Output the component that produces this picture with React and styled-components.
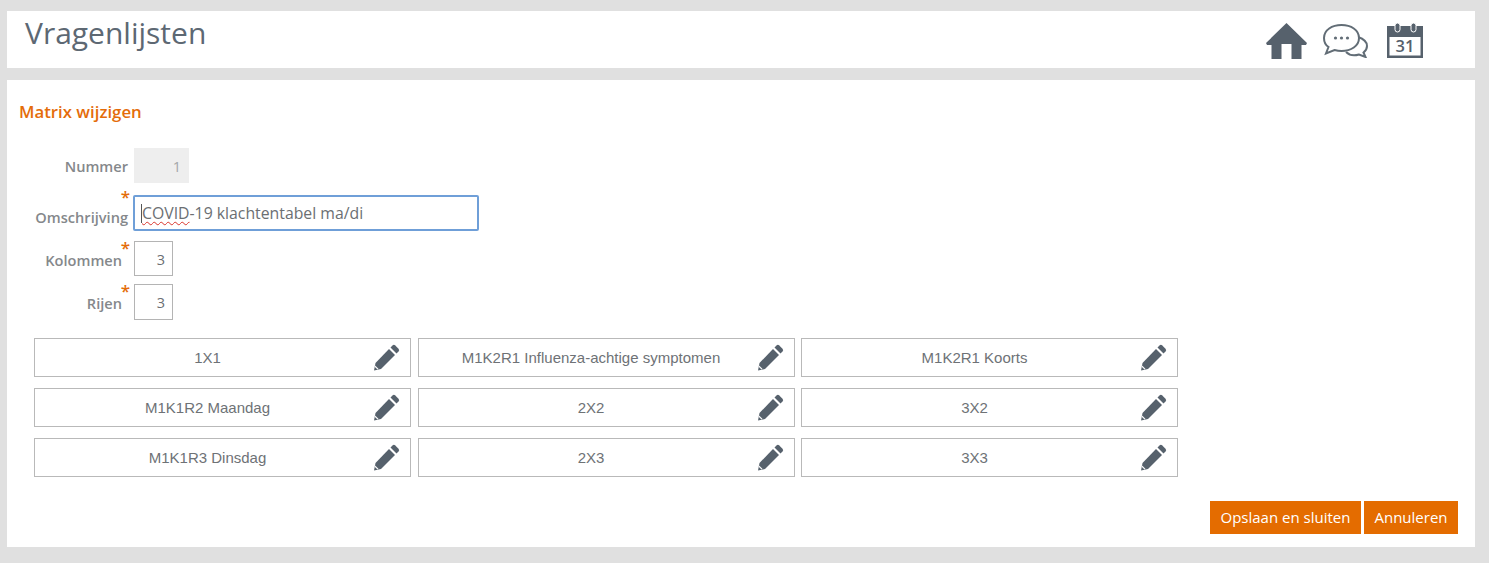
import React from 'react'
import styled, { createGlobalStyle } from 'styled-components'

const GlobalStyle = createGlobalStyle`
  html, body {
    margin: 0;
    padding: 0;
    background: #e0e0e0;
    font-family: 'Open Sans', sans-serif;
  }
`

const cells = [
  '1X1',
  'M1K2R1 Influenza-achtige symptomen',
  'M1K2R1 Koorts',
  'M1K1R2 Maandag',
  '2X2',
  '3X2',
  'M1K1R3 Dinsdag',
  '2X3',
  '3X3',
]

const HomeIcon = () => (
  <svg width='41' height='36' viewBox='0 0 41 36'>
    <path fill='#56616c' d='M20.5 0 L41 20 L40 22 L35.5 22 L35.5 36 L25.5 36 L25.5 21 L15.5 21 L15.5 36 L5.5 36 L5.5 22 L1 22 L0 20 Z' />
  </svg>
)

const ChatIcon = () => (
  <svg width='45' height='34' viewBox='0 0 45 34' fill='#fff' stroke='#626d76' strokeWidth='2'>
    <path d='M35 13 C41 15 44 18 44 22 C44 25 42.5 27 40.5 28.5 L42.5 33 L36 30.5 C31 32 26 31 23 28' />
    <path d='M18.5 1 C28 1 36 6 36 14 C36 22 28 27 18.5 27 C16 27 14 26.7 11.5 26 L3 29.5 L5.5 23 C2.5 21 1 18 1 14 C1 6 9 1 18.5 1 Z' />
    <g fill='#626d76' stroke='none'>
      <circle cx='12.5' cy='14' r='1.6' />
      <circle cx='18.5' cy='14' r='1.6' />
      <circle cx='24.5' cy='14' r='1.6' />
    </g>
  </svg>
)

const CalendarIcon = () => (
  <svg width='36' height='35' viewBox='0 0 36 35'>
    <path fill='#56616c' d='M0 3 H36 V35 H0 Z' />
    <rect x='2.5' y='14' width='31' height='18.5' fill='#fff' />
    <rect x='8' y='0' width='5' height='9' rx='2.5' fill='#56616c' stroke='#fff' strokeWidth='1' />
    <rect x='24' y='0' width='5' height='9' rx='2.5' fill='#56616c' stroke='#fff' strokeWidth='1' />
    <text x='18' y='29' textAnchor='middle' fontFamily='Open Sans, sans-serif' fontWeight='600' fontSize='16.5' fill='#56616c'>31</text>
  </svg>
)

const PencilIcon = () => (
  <svg width='27' height='27' viewBox='0 0 27 27'>
    <path fill='#56616c' d='M19.5 1.5 a2 2 0 0 1 2.8 0 L25.5 4.7 a2 2 0 0 1 0 2.8 L23.5 9.5 L17.5 3.5 Z' />
    <path fill='#56616c' d='M16 5 L22 11 L8 25 L1 26.5 L2.5 19 Z' />
    <path fill='#fff' d='M2.2 21.6 L5.6 25 L4.5 25.4 L1.9 23 Z' />
  </svg>
)

const App = () => {
  return (
    <Page>
      <GlobalStyle />
      <Header>
        <Title>Vragenlijsten</Title>
        <IconBar>
          <HomeIcon />
          <ChatSlot>
            <ChatIcon />
          </ChatSlot>
          <CalendarIcon />
        </IconBar>
      </Header>
      <Main>
        <SectionTitle>Matrix wijzigen</SectionTitle>
        <Form>
          <Row $height={35} $gap={12}>
            <Label>Nummer</Label>
            <Field $width={55} $disabled>1</Field>
          </Row>
          <Row $height={36} $gap={10}>
            <Label $required>Omschrijving</Label>
            <TextField>
              <Caret />
              <Misspelled>COVID</Misspelled>-19 klachtentabel ma/di
            </TextField>
          </Row>
          <Row $height={35} $gap={8}>
            <Label $required $short>Kolommen</Label>
            <Field $width={39}>3</Field>
          </Row>
          <Row $height={36}>
            <Label $required $short>Rijen</Label>
            <Field $width={39}>3</Field>
          </Row>
        </Form>
        <MatrixGrid>
          {cells.map((cell, index) => (
            <Cell key={index}>
              <span>{cell}</span>
              <EditButton>
                <PencilIcon />
              </EditButton>
            </Cell>
          ))}
        </MatrixGrid>
        <Actions>
          <Button>Opslaan en sluiten</Button>
          <Button>Annuleren</Button>
        </Actions>
      </Main>
    </Page>
  )
}

const Page = styled.div`
  width: 1468px;
  height: 563px;
  box-sizing: border-box;
  padding: 11px 0 16px;
  margin-left: 7px;
  display: flex;
  flex-direction: column;
  gap: 12px;
`

const Header = styled.header`
  height: 57px;
  background: #fff;
  display: flex;
  align-items: flex-start;
  justify-content: space-between;
  padding: 0 52px 0 18px;
`

const Title = styled.h1`
  margin: 0;
  font-size: 30px;
  font-weight: 400;
  line-height: 44px;
  color: #5d6873;
`

const IconBar = styled.div`
  display: flex;
  align-items: flex-start;
  gap: 16px;
  padding-top: 12px;
`

const ChatSlot = styled.div`
  display: flex;
  margin: 1px 3px 0 0;
`

const Main = styled.main`
  flex: 1;
  background: #fff;
  display: flex;
  flex-direction: column;
  padding: 0 17px 13px 12px;
`

const SectionTitle = styled.h2`
  margin: 21px 0 0;
  font-size: 16.8px;
  font-weight: 600;
  line-height: 22px;
  color: #e46c0a;
`

const Form = styled.div`
  display: flex;
  flex-direction: column;
  margin-top: 25px;
`

const Row = styled.div`
  display: flex;
  align-items: stretch;
  height: ${(p) => p.$height}px;
  margin-bottom: ${(p) => p.$gap || 0}px;
`

const Label = styled.label`
  position: relative;
  box-sizing: border-box;
  width: 115px;
  padding-right: ${(p) => (p.$short ? 12 : 6)}px;
  text-align: right;
  font-size: 14.6px;
  font-weight: 600;
  line-height: ${(p) => (p.$required ? 38 : 36)}px;
  color: #85888b;
  margin-top: ${(p) => (p.$required && !p.$short ? 3 : 0)}px;

  &::after {
    content: ${(p) => (p.$required ? "'*'" : 'none')};
    position: absolute;
    right: 4px;
    top: ${(p) => (p.$short ? -5 : -13)}px;
    font-size: 17px;
    line-height: 24px;
    font-weight: 600;
    color: #e46c0a;
  }
`

const Field = styled.div`
  box-sizing: border-box;
  width: ${(p) => p.$width}px;
  text-align: right;
  padding-right: 7px;
  font-size: 14.5px;
  line-height: 35px;
  color: ${(p) => (p.$disabled ? '#a3a6a9' : '#6b6f73')};
  background: ${(p) => (p.$disabled ? '#eeeeee' : '#fff')};
  border: 1px solid ${(p) => (p.$disabled ? '#eeeeee' : '#b4b4b4')};
`

const TextField = styled.div`
  position: relative;
  box-sizing: border-box;
  width: 346px;
  margin-left: -1px;
  padding-left: 7px;
  font-size: 15.8px;
  line-height: 32px;
  color: #6b6f73;
  border: 2px solid #6f9fd8;
  border-radius: 2px;
`

const Caret = styled.span`
  position: absolute;
  left: 6px;
  top: 7px;
  width: 1px;
  height: 19px;
  background: #555;
`

const Misspelled = styled.span`
  text-decoration: underline wavy #d9352c 1px;
  text-underline-offset: 2px;
`

const MatrixGrid = styled.div`
  display: grid;
  grid-template-columns: repeat(3, 377px);
  grid-auto-rows: 39px;
  column-gap: 6.5px;
  row-gap: 11px;
  margin: 18px 0 0 15px;
`

const Cell = styled.div`
  position: relative;
  box-sizing: border-box;
  display: flex;
  align-items: center;
  justify-content: center;
  padding-right: 30px;
  border: 1px solid #b9b9b9;
  font-family: 'Liberation Sans', Arial, sans-serif;
  font-size: 15px;
  color: #6e7276;
`

const EditButton = styled.span`
  position: absolute;
  right: 10px;
  top: 5px;
  display: flex;
`

const Actions = styled.div`
  display: flex;
  justify-content: flex-end;
  gap: 3px;
  margin-top: auto;
`

const Button = styled.button`
  height: 33px;
  padding: 0 10.5px;
  border: 0;
  background: #e46c00;
  color: #fff;
  font-family: 'Open Sans', sans-serif;
  font-size: 15px;
  line-height: 33px;
`

export default App
